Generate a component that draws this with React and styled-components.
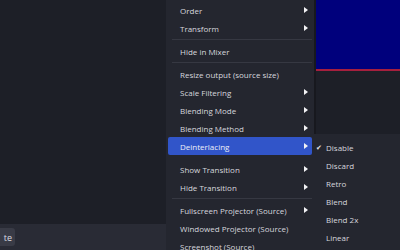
import React from "react";
import styled, { createGlobalStyle } from "styled-components";

const GlobalStyle = createGlobalStyle`
  html, body {
    margin: 0;
    padding: 0;
    background: #1d1f27;
    overflow: hidden;
  }
  #root {
    width: 400px;
    height: 250px;
  }
`;

const Page = styled.div`
  position: relative;
  width: 400px;
  height: 250px;
  display: flex;
  font-family: "Open Sans", "Noto Sans", sans-serif;
  font-size: 8px;
  color: #dcdde3;
`;

const Workspace = styled.div`
  width: 316px;
  display: flex;
  flex-direction: column;
`;

const Canvas = styled.div`
  flex: 1;
`;

const Dock = styled.div`
  height: 26px;
  width: 166px;
  background: #292b35;
  display: flex;
  align-items: center;
`;

const DockButton = styled.div`
  height: 18px;
  width: 15px;
  border-radius: 0 3px 3px 0;
  background: #393b46;
  display: flex;
  align-items: center;
  justify-content: flex-end;
  padding-right: 3px;
  box-sizing: border-box;
  overflow: hidden;
  white-space: nowrap;
  font-size: 9px;
`;

const PreviewColumn = styled.div`
  flex: 1;
  display: flex;
  flex-direction: column;
`;

const Preview = styled.div`
  height: 69px;
  background: #00007c;
  border-bottom: 2px solid #a51f3e;
`;

const Menu = styled.div`
  position: absolute;
  left: ${p => p.left}px;
  top: ${p => p.top}px;
  width: ${p => p.width}px;
  padding: 4px 0;
  background: #24262f;
  border-right: 2px solid #17181e;
  box-sizing: border-box;
  display: flex;
  flex-direction: column;
`;

const Item = styled.div`
  height: 18px;
  margin: 0 2px;
  padding-left: ${p => p.indent}px;
  border-radius: 2px;
  display: flex;
  align-items: center;
  justify-content: space-between;
  white-space: nowrap;
  background: ${p => (p.active ? "#3155c9" : "transparent")};
  color: ${p => (p.active ? "#eef0f8" : "#d6d7de")};
`;

const Label = styled.span`
  display: flex;
  align-items: center;
`;

const Arrow = styled.span`
  width: 0;
  height: 0;
  margin-right: 4px;
  border-top: 3px solid transparent;
  border-bottom: 3px solid transparent;
  border-left: 4px solid #f2f2f5;
`;

const Check = styled.span`
  width: 10px;
  margin-left: -9px;
  font-size: 7px;
  color: #e6e7ec;
`;

const Separator = styled.div`
  height: 1px;
  margin: 2px 2px 2px 6px;
  background: ${p => (p.faint ? "transparent" : "#363842")};
`;

const mainItems = [
  { label: "Order", sub: true },
  { label: "Transform", sub: true },
  "sep",
  { label: "Hide in Mixer" },
  "sep",
  { label: "Resize output (source size)" },
  { label: "Scale Filtering", sub: true },
  { label: "Blending Mode", sub: true },
  { label: "Blending Method", sub: true },
  { label: "Deinterlacing", sub: true, active: true },
  "faint",
  { label: "Show Transition", sub: true },
  { label: "Hide Transition", sub: true },
  "sep",
  { label: "Fullscreen Projector (Source)", sub: true },
  { label: "Windowed Projector (Source)" },
  { label: "Screenshot (Source)" },
];

const deinterlaceModes = ["Disable", "Discard", "Retro", "Blend", "Blend 2x", "Linear"];

export default function App() {
  return (
    <>
      <GlobalStyle />
      <Page>
        <Workspace>
          <Canvas />
          <Dock>
            <DockButton>te</DockButton>
          </Dock>
        </Workspace>
        <PreviewColumn>
          <Preview />
        </PreviewColumn>

        <Menu left={166} top={-3} width={150}>
          {mainItems.map((it, i) =>
            typeof it === "string" ? (
              <Separator key={i} faint={it === "faint"} />
            ) : (
              <Item key={i} indent={12} active={it.active}>
                <Label>{it.label}</Label>
                {it.sub && <Arrow />}
              </Item>
            )
          )}
        </Menu>

        <Menu left={313} top={134} width={90}>
          {deinterlaceModes.map((m, i) => (
            <Item key={m} indent={10}>
              <Label>
                <Check>{i === 0 ? "✔" : ""}</Check>
                {m}
              </Label>
            </Item>
          ))}
        </Menu>
      </Page>
    </>
  );
}
